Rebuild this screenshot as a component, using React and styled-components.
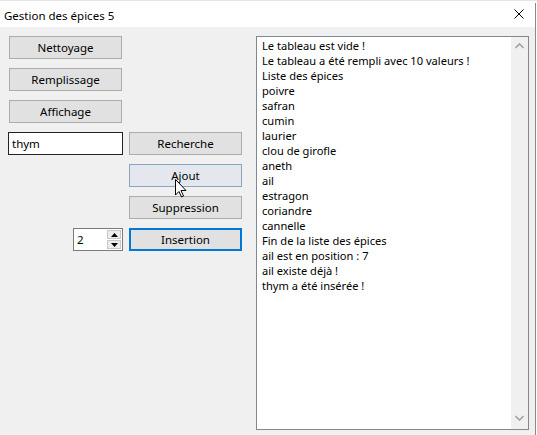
import styled, { createGlobalStyle } from "styled-components"

const GlobalStyle = createGlobalStyle`
  html, body {
    margin: 0;
    padding: 0;
    background: #ffffff;
  }
  body {
    font-family: "Noto Sans", "Segoe UI", sans-serif;
    font-size: 11.5px;
    color: #000;
  }
`

const lines = [
  "Le tableau est vide !",
  "Le tableau a été rempli avec 10 valeurs !",
  "Liste des épices",
  "poivre",
  "safran",
  "cumin",
  "laurier",
  "clou de girofle",
  "aneth",
  "ail",
  "estragon",
  "coriandre",
  "cannelle",
  "Fin de la liste des épices",
  "ail est en position : 7",
  "ail existe déjà !",
  "thym a été insérée !",
]

function App() {
  return (
    <Desktop>
      <GlobalStyle />
      <Window>
        <TitleBar>
          <Title>Gestion des épices 5</Title>
          <CloseIcon viewBox="0 0 10 10">
            <path d="M0.5 0.5 L9.5 9.5 M9.5 0.5 L0.5 9.5" stroke="#000" strokeWidth="1" />
          </CloseIcon>
        </TitleBar>
        <Client>
          <Controls>
            <Button $col={1}>Nettoyage</Button>
            <Button $col={1}>Remplissage</Button>
            <Button $col={1}>Affichage</Button>
            <TextField defaultValue="thym" />
            <Button $col={2}>Recherche</Button>
            <Button $col={2} $state="hover">Ajout</Button>
            <Button $col={2}>Suppression</Button>
            <Spin>
              <SpinValue>2</SpinValue>
              <SpinButtons>
                <SpinButton>
                  <svg width="7" height="4" viewBox="0 0 7 4"><path d="M0 4 L3.5 0 L7 4 Z" fill="#000" /></svg>
                </SpinButton>
                <SpinButton>
                  <svg width="7" height="4" viewBox="0 0 7 4"><path d="M0 0 L3.5 4 L7 0 Z" fill="#000" /></svg>
                </SpinButton>
              </SpinButtons>
            </Spin>
            <Button $col={2} $state="focus">Insertion</Button>
            <Cursor viewBox="0 0 12 19">
              <path
                d="M0.5 0.5 L0.5 16 L4 12.5 L6.5 18 L8.5 17 L6 11.5 L11 11.5 Z"
                fill="#fff"
                stroke="#000"
                strokeWidth="1"
                strokeLinejoin="miter"
              />
            </Cursor>
          </Controls>
          <ListBox>
            <ListItems>
              {lines.map((l, i) => (
                <Item key={i}>{l}</Item>
              ))}
            </ListItems>
            <ScrollBar>
              <svg width="9" height="6" viewBox="0 0 9 6"><path d="M0.5 5 L4.5 1 L8.5 5" fill="none" stroke="#a3a3a3" strokeWidth="1.6" /></svg>
              <svg width="9" height="6" viewBox="0 0 9 6"><path d="M0.5 1 L4.5 5 L8.5 1" fill="none" stroke="#a3a3a3" strokeWidth="1.6" /></svg>
            </ScrollBar>
          </ListBox>
        </Client>
      </Window>
    </Desktop>
  )
}

export default App

const Desktop = styled.div`
  width: 537px;
  height: 435px;
  overflow: hidden;
  padding-top: 2px;
  box-sizing: border-box;
  background: #ffffff;
  border-top: 1px solid #e4e4e4;
`

const Window = styled.div`
  width: 535px;
  height: 460px;
  border-right: 1px solid #8a8a8a;
  background: #f0f0f0;
  box-sizing: content-box;
`

const TitleBar = styled.div`
  height: 24px;
  background: #fff;
  display: flex;
  align-items: center;
  justify-content: space-between;
  padding: 0 11px 0 4px;
`

const Title = styled.span`
  font-size: 11.5px;
  color: #000;
`

const CloseIcon = styled.svg`
  width: 10px;
  height: 10px;
  margin-top: -2px;
`

const Client = styled.div`
  display: flex;
  align-items: flex-start;
  padding: 9px 0 0 8px;
  gap: 14px;
`

const Controls = styled.div`
  position: relative;
  display: grid;
  grid-template-columns: 115px 113px;
  grid-auto-rows: 23px;
  column-gap: 6px;
  row-gap: 9px;
`

const Button = styled.button`
  grid-column: ${(p) => p.$col};
  width: 113px;
  height: 23px;
  margin-left: ${(p) => (p.$col === 1 ? "1px" : "0")};
  box-sizing: border-box;
  font-family: "Noto Sans", "Segoe UI", sans-serif;
  font-size: 11.5px;
  color: #000;
  padding: 0;
  background: ${(p) => (p.$state === "hover" ? "#e4e8ee" : "#e1e1e1")};
  border: ${(p) =>
    p.$state === "focus"
      ? "2px solid #0078d7"
      : p.$state === "hover"
      ? "1px solid #8aa4c2"
      : "1px solid #adadad"};
`

const TextField = styled.input`
  grid-column: 1;
  width: 115px;
  height: 23px;
  box-sizing: border-box;
  border: 1px solid #222;
  background: #fff;
  font-family: "Noto Sans", "Segoe UI", sans-serif;
  font-size: 11.5px;
  padding: 0 3px;
  outline: none;
`

const Spin = styled.div`
  grid-column: 1;
  justify-self: end;
  width: 50px;
  height: 23px;
  box-sizing: border-box;
  border: 1px solid #7a7a7a;
  background: #fff;
  display: flex;
  align-items: center;
  justify-content: space-between;
  padding: 0 1px 0 3px;
`

const SpinValue = styled.span`
  font-size: 11.5px;
  color: #000;
`

const SpinButtons = styled.div`
  display: flex;
  flex-direction: column;
  gap: 1px;
`

const SpinButton = styled.div`
  width: 14px;
  height: 9px;
  box-sizing: border-box;
  border: 1px solid #c8c8c8;
  background: #ececec;
  display: flex;
  align-items: center;
  justify-content: center;
`

const Cursor = styled.svg`
  position: absolute;
  left: 167px;
  top: 143px;
  width: 12px;
  height: 19px;
`

const ListBox = styled.div`
  width: 273px;
  height: 394px;
  box-sizing: border-box;
  border: 1px solid #828790;
  background: #fff;
  display: flex;
`

const ListItems = styled.div`
  flex: 1;
  padding: 1px 0 0 5px;
`

const Item = styled.div`
  height: 15px;
  line-height: 15px;
  font-size: 11.1px;
  white-space: nowrap;
`

const ScrollBar = styled.div`
  width: 17px;
  background: #f0f0f0;
  display: flex;
  flex-direction: column;
  justify-content: space-between;
  align-items: center;
  padding: 6px 0 8px;
  box-sizing: border-box;
`
